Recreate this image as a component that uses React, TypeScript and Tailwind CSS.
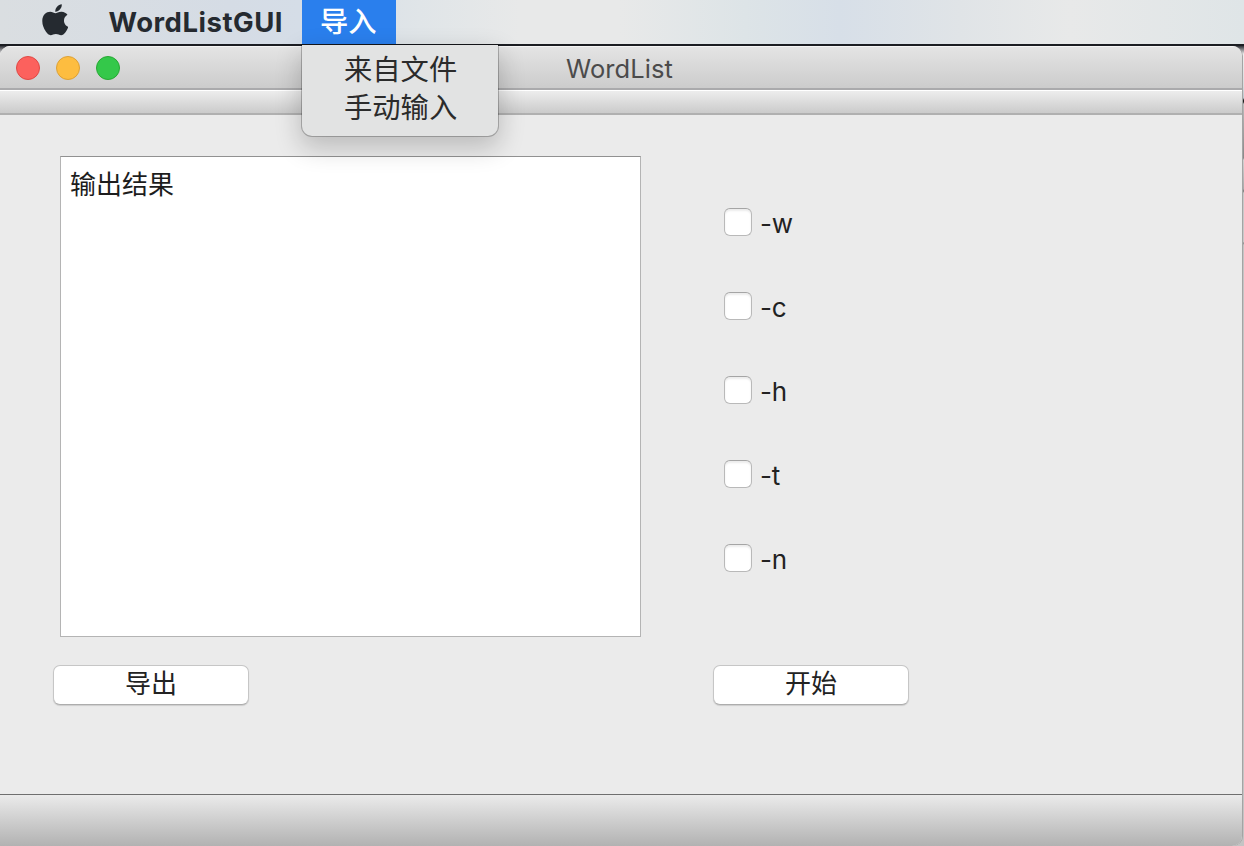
import { FaApple } from "react-icons/fa";

const options = ["-w", "-c", "-h", "-t", "-n"];

function PushButton({ label }: { label: string }) {
  return (
    <button className="flex h-10 w-[196px] items-center justify-center rounded-[7px] border border-[#c6c6c6] border-b-[#adadad] bg-white pb-[2px] text-[26px] leading-none text-[#222] shadow-[0_1px_1px_rgba(0,0,0,0.13)]">
      {label}
    </button>
  );
}

function MenuBar() {
  return (
    <header className="flex h-11 shrink-0 bg-[linear-gradient(90deg,#dadee1_0px,#d5dce5_230px,#d5dde7_300px,#e0e5e8_420px,#e8e9e9_520px,#e8e9e9_620px,#dde4e7_745px,#d7dfe8_840px,#e0e4e7_960px,#e8e9e9_1070px,#dfe5e7_1244px)] text-[#252a30]">
      <div className="w-[108.5px] pl-[41.5px] pt-[2px]">
        <FaApple className="h-[35.5px] w-[26.5px]" />
      </div>
      <div className="w-[193.5px] whitespace-nowrap text-[27.5px] font-bold leading-[44px] tracking-[0.52px]">
        WordListGUI
      </div>
      <div className="relative z-10 w-[94px] bg-[#2a7fed]">
        <div className="pl-[18px] text-[28.3px] font-medium leading-[44px] text-white">导入</div>
        <div className="absolute left-0 top-[45px] h-[91px] w-[196px] rounded-b-[10px] bg-[#e2e3e3] pl-[42px] pt-[6px] text-[28.3px] leading-[38px] text-[#2b2b2b] shadow-[0_0_0_1px_rgba(0,0,0,0.23),0_10px_26px_2px_rgba(0,0,0,0.2)]">
          <div className="whitespace-nowrap">来自文件</div>
          <div className="whitespace-nowrap">手动输入</div>
        </div>
      </div>
    </header>
  );
}

export default function App() {
  return (
    <div className="flex h-[846px] w-[1244px] flex-col overflow-hidden bg-[#b5b5b5] font-[Inter,'Noto_Sans_CJK_SC',sans-serif]">
      <MenuBar />
      <div className="h-0.5 shrink-0 bg-[#1b1d22]" />
      <div className="flex min-h-0 flex-1 bg-[linear-gradient(180deg,#303238_0px,#eeeeee_8px,#d8dcde_40px,#bdc8cf_52px,#222_54px,#222_56px,#bbbbbb_58px,#888_112px,#d0d0d0_114px,#aaa_143px,#777_145px,#c8c8c8_147px,#c8c8c8_196px,#888_197px,#c4c4c4_199px,#c4c4c4_100%)]">
        <main className="flex w-[1242px] flex-col overflow-hidden rounded-[10px] rounded-bl-none bg-[#ebebeb] shadow-[1px_0_0_0_#a4a4a4]">
          <div className="flex h-11 shrink-0 items-center border-b-2 border-t border-b-[#aaaaac] border-t-[#f5f5f5] bg-gradient-to-b from-[#e4e4e4] to-[#cccccc] pl-4">
            <div className="flex w-[550px] gap-4">
              <span className="size-6 rounded-full border border-[#df4945] bg-[#fc615d]" />
              <span className="size-6 rounded-full border border-[#dca036] bg-[#fdbd40]" />
              <span className="size-6 rounded-full border border-[#27a833] bg-[#34c84a]" />
            </div>
            <h1 className="pt-[2px] text-[25.5px] leading-none tracking-[0.08px] text-[#4b4b4b]">WordList</h1>
          </div>
          <div className="h-[25px] shrink-0 border-b-2 border-t border-b-[#b0b0b0] border-t-white bg-gradient-to-b from-[#ededed] to-[#cbcbcb]" />
          <section className="flex min-h-0 flex-1 pt-[41px]">
            <div className="w-[660px] pl-[53px]">
              <div className="ml-[7px] h-[481px] w-[581px] border border-[#b4b4b4] border-t-[#919191] bg-white px-[9px] pt-[9px] text-[26px] leading-[38px] text-[#1d1d1d]">
                输出结果
              </div>
              <div className="mt-7">
                <PushButton label="导出" />
              </div>
            </div>
            <div className="pl-[53px]">
              <div className="ml-[11px] flex h-[509px] flex-col gap-14 pt-[52px]">
                {options.map((option) => (
                  <label key={option} className="flex h-7 items-center gap-2 text-[26px] leading-none text-[#222]">
                    <span className="size-7 rounded-[6px] border border-[#b9b9b9] border-t-[#a5a5a5] bg-white shadow-[inset_0_2px_2px_rgba(0,0,0,0.08)]" />
                    <span className="pt-[3px] tracking-[-0.2px]">{option}</span>
                  </label>
                ))}
              </div>
              <PushButton label="开始" />
            </div>
          </section>
          <footer className="h-[52px] shrink-0 border-t border-[#6f6f6f] bg-gradient-to-b from-[#ebebeb] to-[#b2b2b2]" />
        </main>
      </div>
    </div>
  );
}
